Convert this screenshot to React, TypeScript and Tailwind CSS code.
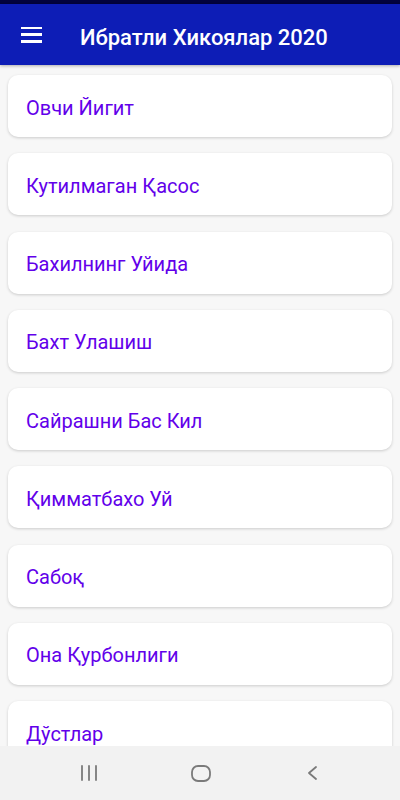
import React from "react";

const stories = [
  "Овчи Йигит",
  "Кутилмаган Қасос",
  "Бахилнинг Уйида",
  "Бахт Улашиш",
  "Сайрашни Бас Кил",
  "Қимматбахо Уй",
  "Сабоқ",
  "Она Қурбонлиги",
  "Дўстлар",
];

export default function App() {
  return (
    <div
      className="flex h-[800px] w-[400px] flex-col overflow-hidden bg-[#f7f7f7]"
      style={{ fontFamily: "Roboto, 'Noto Sans', sans-serif" }}
    >
      {/* status bar strip */}
      <div className="h-[4px] shrink-0 bg-[#02023d]" />

      {/* app bar */}
      <header className="flex h-[61px] shrink-0 items-center bg-[#0d1db6] shadow-[0_1px_3px_rgba(0,0,0,0.3)]">
        <button type="button" aria-label="menu" className="ml-[21px] flex h-[16px] w-[21px] flex-col justify-between">
          <span className="block h-[2.5px] w-full bg-white" />
          <span className="block h-[2.5px] w-full bg-white" />
          <span className="block h-[2.5px] w-full bg-white" />
        </button>
        <h1 className="ml-[38px] pt-[5px] text-[22px] font-medium text-white">
          Ибратли Хикоялар 2020
        </h1>
      </header>

      {/* list */}
      <main className="flex min-h-0 flex-1 flex-col gap-[16.25px] overflow-hidden px-[8px] pt-[10px]">
        {stories.map((title) => (
          <div
            key={title}
            className="flex h-[62px] shrink-0 items-center rounded-[10px] bg-white px-[18px] pt-[3px] shadow-[0_1px_3px_rgba(0,0,0,0.18)]"
          >
            <span className="text-[20px] text-[#6200ea]">{title}</span>
          </div>
        ))}
      </main>

      {/* system nav bar */}
      <nav className="flex h-[54px] shrink-0 items-center bg-[#f2f2f2] pl-[80px]">
        <svg width="18" height="16" viewBox="0 0 18 16">
          <g stroke="#7a7a7a" strokeWidth="1.8" strokeLinecap="round">
            <line x1="2" y1="1" x2="2" y2="15" />
            <line x1="9" y1="1" x2="9" y2="15" />
            <line x1="16" y1="1" x2="16" y2="15" />
          </g>
        </svg>
        <svg width="20" height="17" viewBox="0 0 20 17" className="ml-[93px]">
          <rect x="1" y="1" width="18" height="15" rx="6" fill="none" stroke="#7a7a7a" strokeWidth="1.8" />
        </svg>
        <svg width="11" height="14" viewBox="0 0 11 14" className="ml-[96px]">
          <polyline points="9,1 2,7 9,13" fill="none" stroke="#7a7a7a" strokeWidth="1.8" strokeLinecap="round" strokeLinejoin="round" />
        </svg>
      </nav>
    </div>
  );
}
